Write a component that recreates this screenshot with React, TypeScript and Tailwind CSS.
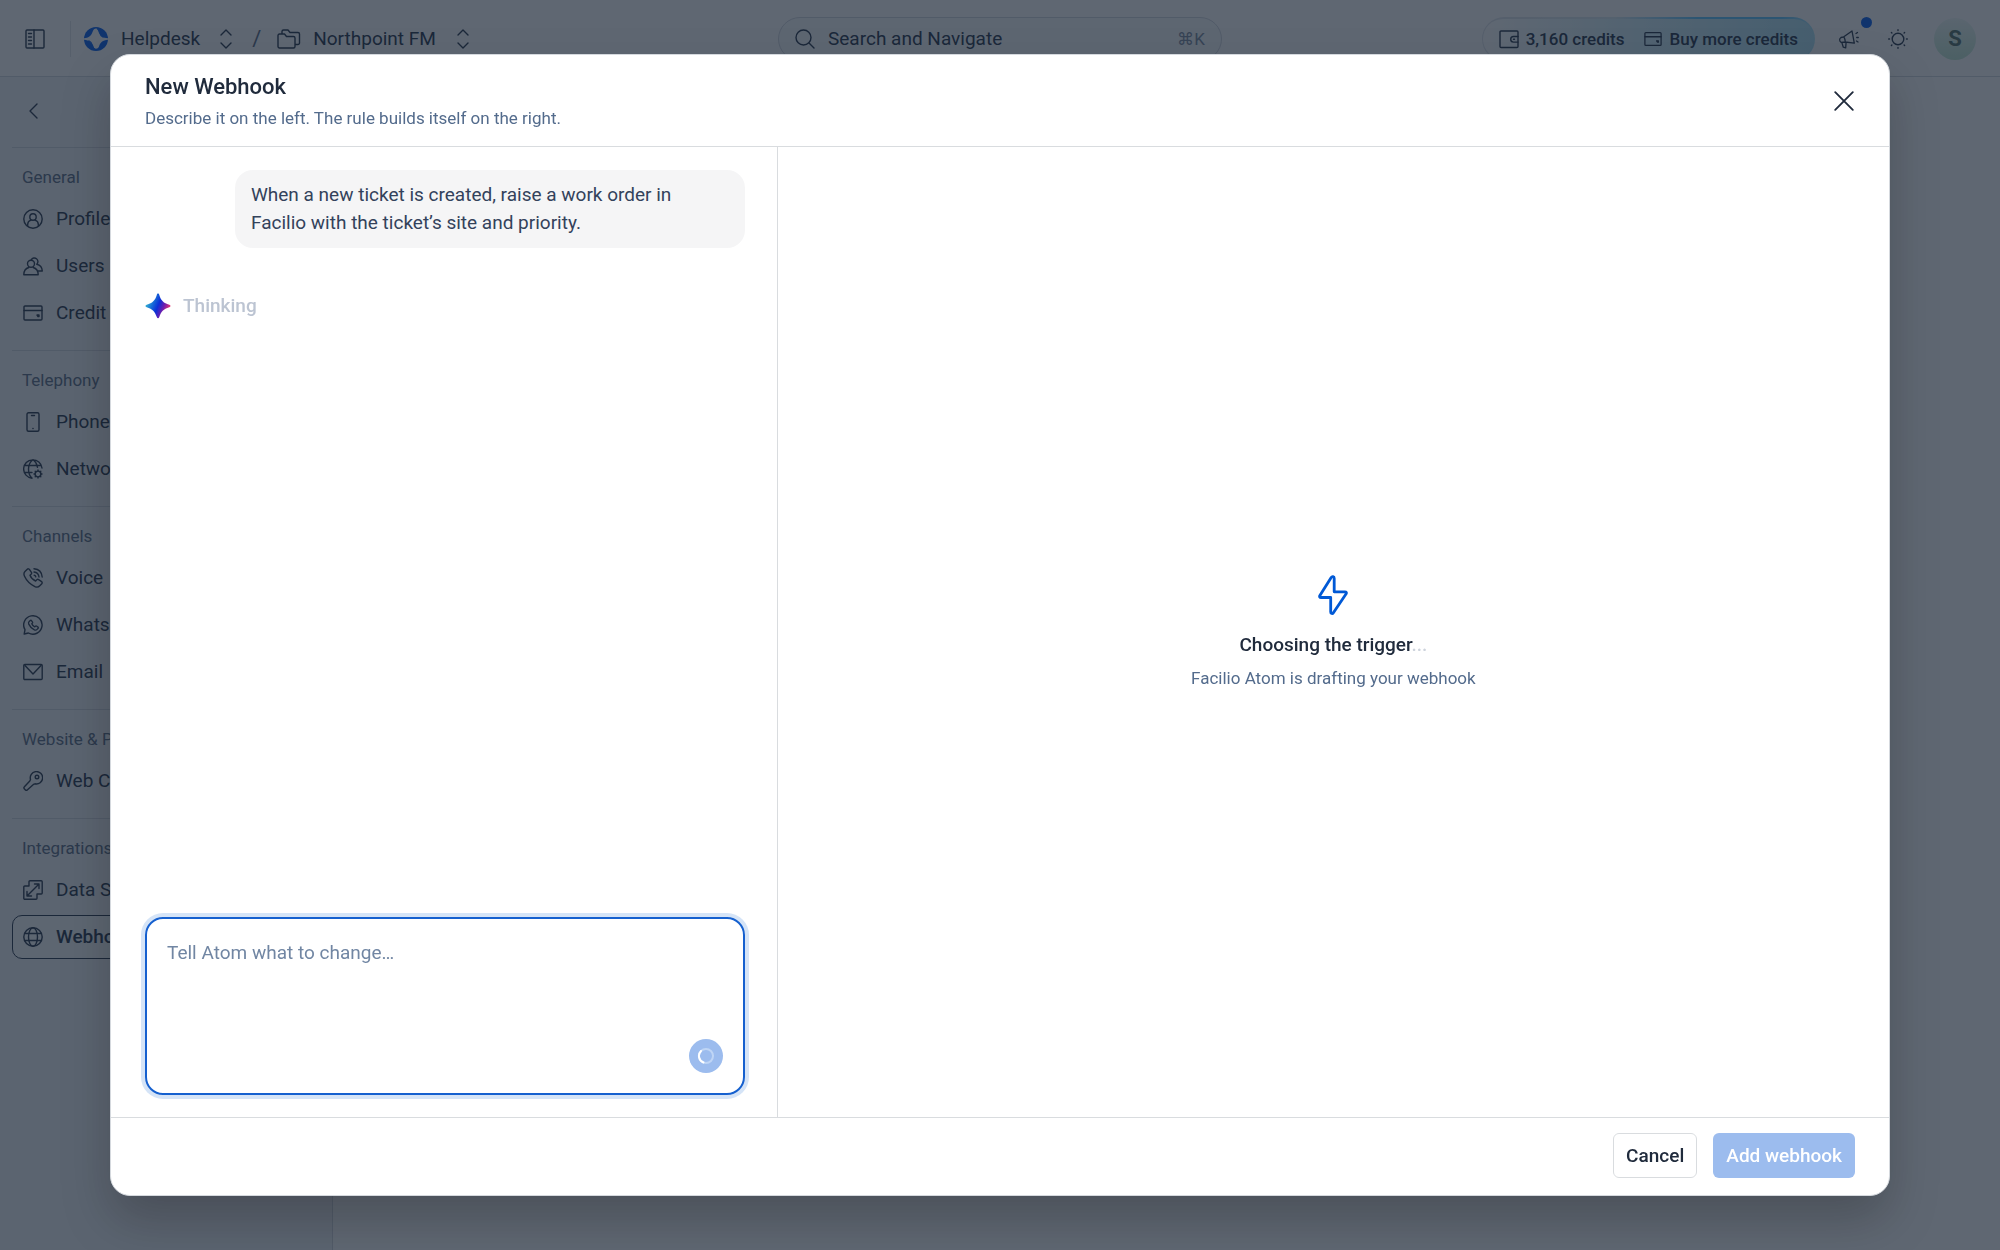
import React, { useState } from "react";

interface IconProps {
  className?: string;
  children: React.ReactNode;
}

const Icon = ({ className = "size-5", children }: IconProps) => (
  <svg
    viewBox="0 0 20 20"
    fill="none"
    stroke="currentColor"
    strokeWidth="1.4"
    strokeLinecap="round"
    strokeLinejoin="round"
    className={`shrink-0 ${className}`}
    aria-hidden="true"
  >
    {children}
  </svg>
);

const PanelIcon = () => (
  <Icon>
    <rect x="1" y="1" width="18" height="18" rx="1" />
    <path d="M9 1v18M3.500 4.500h3M3.500 8h3M3.500 11.500h3M3.500 15h3" />
  </Icon>
);

const ChevronsIcon = () => (
  <Icon>
    <path d="M5 6l5-5 5 5M5 14l5 5 5-5" />
  </Icon>
);

const FolderIcon = () => (
  <svg viewBox="0 0 24 20" fill="none" stroke="currentColor" strokeWidth="1.4" strokeLinejoin="round" className="h-5 w-6 shrink-0" aria-hidden="true">
    <path d="M1 6.500a1.500 1.500 0 0 1 1.500-1.500h5l2 2.500h7A1.500 1.500 0 0 1 18 9v8.500a1.500 1.500 0 0 1-1.500 1.500h-14A1.500 1.500 0 0 1 1 17.500z" />
    <path d="M5 5V2.500A1.500 1.500 0 0 1 6.500 1h4.500l2 2.500h8A1.500 1.500 0 0 1 22.500 5v9a1.500 1.500 0 0 1-1.500 1.500h-3" />
  </svg>
);

const SearchIcon = () => (
  <Icon>
    <circle cx="8.500" cy="8.500" r="7.500" />
    <path d="M14 14l5 5" />
  </Icon>
);

const CardIcon = ({ className }: { className?: string }) => (
  <Icon className={className}>
    <rect x="1" y="3" width="18" height="14" rx="1" />
    <path d="M1 7.500h18" />
    <path d="M14 12h2v1.500h-1z" fill="currentColor" />
  </Icon>
);

const WalletIcon = () => (
  <Icon>
    <rect x="1" y="2" width="18" height="16.500" rx="1" />
    <path d="M19 7.500h-4.500a2.800 2.800 0 0 0 0 5.600H19M14.500 10.300h1" />
  </Icon>
);

const MegaphoneIcon = () => (
  <Icon>
    <path
      d="M13 2L15.300 14.200 6.300 13 2.200 13.400A2.800 2.800 0 0 1 2 8.500L4.800 7.800zM4.800 7.800C6 9.500 6.300 11 6.300 13M2.800 13.400l1.500 4.800 2.400.6.400-5.700M17 4.500l1.500-1M17.700 8.500h1.600M17.500 12l1.500 1"
      strokeWidth="1.300"
    />
  </Icon>
);

const SunIcon = () => (
  <Icon>
    <circle cx="10" cy="10" r="5.800" />
    <path d="M10 .7v.8M10 18.500v.8M.7 10h.8M18.500 10h.8M3.400 3.400l.5.5M16.100 16.100l.5.5M3.400 16.600l.5-.5M16.100 3.900l.5-.5" />
  </Icon>
);

const ProfileIcon = () => (
  <Icon>
    <circle cx="10" cy="10" r="9.200" />
    <circle cx="10" cy="8" r="3.200" />
    <path d="M4.700 16.500v-1.200c0-2 1.500-3.500 3.300-4.100M15.300 16.500v-1.200c0-2-1.500-3.500-3.300-4.100" />
  </Icon>
);

const UsersIcon = () => (
  <Icon>
    <circle cx="8" cy="7.700" r="3.500" />
    <path d="M.8 18.800c0-4 2.200-6.500 5-7.300M10.200 11.500c2.800.8 5 3.300 5 7.300H.8" />
    <path d="M8.200 3.800a3.600 3.600 0 1 1 5.600 4.400c3 .7 5.300 3 5.500 6.800h-4.500" />
  </Icon>
);

const PhoneIcon = () => (
  <Icon>
    <rect x="4" y=".8" width="12" height="18.400" rx="1.500" />
    <path d="M8.500 3.500h3M9.900 16.500h.2" />
  </Icon>
);

const GlobeIcon = () => (
  <Icon>
    <circle cx="10" cy="10" r="9.200" />
    <ellipse cx="10" cy="10" rx="4.500" ry="9.200" />
    <path d="M1.800 6.500h16.400M1.800 13.500h16.400" />
  </Icon>
);

const NetworkIcon = () => (
  <Icon>
    <path d="M19 9A9.200 9.200 0 1 0 9 19.200M9.800.8C7 3 5.500 6.500 5.500 10s1 7 3.500 9M10.200.8c2.300 1.700 3.800 4.200 4.300 7.500M1.800 6.500h16.400M1.800 13.500H9" />
    <circle cx="15" cy="15" r="2.900" />
    <path d="M15 11v1M15 18v1M11 15h1M18 15h1M12.200 12.200l.7.7M17.100 17.100l.7.7M12.200 17.800l.7-.7M17.100 12.900l.7-.7" />
  </Icon>
);

const HANDSET =
  "M2.200 3.200L4.300 1.200a1.400 1.400 0 0 1 2.100.2l2 3a1.400 1.400 0 0 1-.3 1.800L7 7.300c.8 2.200 3.300 4.700 5.600 5.700l1.200-1.200a1.400 1.400 0 0 1 1.800-.2l3 2a1.400 1.400 0 0 1 .2 2.100l-2 2.100c-1.300 1.400-3.200 1.600-4.900.8C7.300 16.300 3.400 12.500 1.400 8 .6 6.200.8 4.600 2.200 3.200z";

const VoiceIcon = () => (
  <Icon>
    <path d={HANDSET} />
    <path d="M11 .8c4.800.4 7.800 3.700 8.200 8.200M11 4c3 .4 4.700 2.200 5 5M11.200 7.200c1 .1 1.500.7 1.600 1.700" />
  </Icon>
);

const WhatsappIcon = () => (
  <Icon>
    <path d="M1.200 19l.8-4.300A9.200 9.200 0 1 1 5.400 18z" />
    <g transform="translate(5 4.800) scale(.54)">
      <path d={HANDSET} strokeWidth="2.400" />
    </g>
  </Icon>
);

const MailIcon = () => (
  <Icon>
    <rect x=".8" y="2.500" width="18.400" height="15" rx="1" />
    <path d="M2 3.500l8 8.500 8-8.500" />
  </Icon>
);

const KeyIcon = () => (
  <Icon>
    <path d="M7.500 8.500A6.200 6.200 0 1 1 12 12.800l-1.600.6L4.500 18.800a1.500 1.500 0 0 1-2.300 0l-.8-.9a1.500 1.500 0 0 1 0-2.100L6.800 10z" />
    <circle cx="14" cy="6" r="1.800" />
  </Icon>
);

const DataIcon = () => (
  <Icon>
    <path d="M6 6V1.800a1 1 0 0 1 1-1h11.200a1 1 0 0 1 1 1V13a1 1 0 0 1-1 1H14v4.200a1 1 0 0 1-1 1H1.800a1 1 0 0 1-1-1V7a1 1 0 0 1 1-1zM4 16L16 4M11.500 4H16v4.500M4 11.500V16h4.500" />
  </Icon>
);

const HelpdeskLogo = () => (
  <svg viewBox="0 0 24 24" className="size-6 shrink-0" aria-hidden="true">
    <circle cx="12" cy="12" r="12" className="fill-[#1166ee]" />
    <path d="M0 11.200c4.500-.3 7-2 8.500-6.200.8-2.500 2-3.500 3.500-3.500 1.700 0 2.700 1.500 3.300 4 1 3.500 3.700 5.400 8.700 5.700v1.600c-5.500.4-7.700 2.700-9 6.700-1.200 3-4.800 3-6 0C7.700 15.500 5.500 13.200 0 12.800z" className="fill-white" />
    <path d="M13 1.500c1.500.7 2 2.500 2.500 4.200.6 2.300 1.800 3.800 4 4.800M4.500 13.500c2.200 1 3.400 2.500 4 4.800.5 1.700 1 3.500 2.500 4.200" fill="none" strokeWidth="1.200" className="stroke-[#1166ee]" />
  </svg>
);

const AtomStar = () => (
  <svg viewBox="0 0 26 26" className="size-[26px] shrink-0" aria-hidden="true">
    <defs>
      <linearGradient id="atom" x1="0" y1="0.3" x2="1" y2="0.7">
        <stop offset="0.05" stopColor="#35b6d0" />
        <stop offset="0.3" stopColor="#1668d8" />
        <stop offset="0.5" stopColor="#0d2fd6" />
        <stop offset="0.7" stopColor="#6a1fb0" />
        <stop offset="0.95" stopColor="#f0356e" />
      </linearGradient>
    </defs>
    <path d="M13 .5c.6 0 1 .5 1.300 1.400C16 7.500 18.500 10 24.300 11.700c1.600.5 1.600 2 0 2.500C18.500 16 16 18.500 14.300 24.100c-.5 1.600-2 1.600-2.500 0C10 18.500 7.500 16 1.700 14.200c-1.600-.5-1.600-2 0-2.500C7.500 10 10 7.500 11.800 1.900 12 1 12.400.5 13 .5z" fill="url(#atom)" />
  </svg>
);

const groups = [
  {
    title: "General",
    items: [
      { label: "Profile", icon: <ProfileIcon /> },
      { label: "Users", icon: <UsersIcon /> },
      { label: "Credit Usage", icon: <CardIcon /> },
    ],
  },
  {
    title: "Telephony",
    items: [
      { label: "Phone Numbers", icon: <PhoneIcon /> },
      { label: "Network", icon: <NetworkIcon /> },
    ],
  },
  {
    title: "Channels",
    items: [
      { label: "Voice", icon: <VoiceIcon /> },
      { label: "WhatsApp", icon: <WhatsappIcon /> },
      { label: "Email", icon: <MailIcon /> },
    ],
  },
  {
    title: "Website & Portal",
    items: [{ label: "Web Chat", icon: <KeyIcon /> }],
  },
  {
    title: "Integrations",
    items: [
      { label: "Data Sources", icon: <DataIcon /> },
      { label: "Webhooks", icon: <GlobeIcon />, active: true },
    ],
  },
];

const TopBar = () => (
  <header className="grid h-[77px] shrink-0 grid-cols-[1fr_444px_1fr] items-center border-b border-[#d5d9e0] bg-white pt-[2px] text-[#334155]">
    <div className="flex items-center pl-[25px]">
      <button type="button" aria-label="Toggle sidebar">
        <PanelIcon />
      </button>
      <span className="ml-[25px] h-9 w-px bg-[#e2e5ea]" />
      <button type="button" className="ml-[13px] flex items-center gap-[13px]">
        <HelpdeskLogo />
        <span className="text-[19px] leading-7">Helpdesk</span>
      </button>
      <button type="button" aria-label="Switch app" className="ml-4">
        <ChevronsIcon />
      </button>
      <span className="ml-4 text-[22px] leading-7 text-[#64748b]">/</span>
      <button type="button" className="ml-4 flex items-center gap-3">
        <FolderIcon />
        <span className="text-[19px] leading-7">Northpoint FM</span>
      </button>
      <button type="button" aria-label="Switch workspace" className="ml-[17px]">
        <ChevronsIcon />
      </button>
    </div>

    <label className="flex h-11 items-center rounded-full border border-[#d5d9e0] bg-[#f8fafc] px-4">
      <SearchIcon />
      <input
        type="text"
        aria-label="Search and Navigate"
        placeholder="Search and Navigate"
        className="ml-[13px] min-w-0 flex-1 bg-transparent text-[19px] leading-7 outline-none placeholder:text-[#334155]"
      />
      <kbd className="font-[Roboto,sans-serif] text-[17px] leading-6 text-[#8492a6]">⌘K</kbd>
    </label>

    <div className="flex items-center justify-end pr-6">
      <div className="rounded-full bg-[linear-gradient(90deg,#e2e5ea,#dcebf2_40%,#64c8ff_65%,#64c8ff_90%,#b5e6f5)] px-px py-[2px]">
        <div className="flex h-10 items-center rounded-full bg-[linear-gradient(90deg,#fff,#dcf3fb_40%,#b4e4f5)] px-4 text-[17px] leading-6 font-medium">
          <WalletIcon />
          <span className="ml-[7px]">3,160 credits</span>
          <button type="button" className="ml-5 flex items-center gap-[7px]">
            <CardIcon className="size-[18px]" />
            Buy more credits
          </button>
        </div>
      </div>
      <button type="button" aria-label="Announcements" className="relative ml-6">
        <MegaphoneIcon />
        <span className="absolute -top-[12px] -right-[13px] size-[11px] rounded-full bg-[#1166ee]" />
      </button>
      <button type="button" aria-label="Theme" className="ml-[29px]">
        <SunIcon />
      </button>
      <span className="ml-[26px] flex size-[42px] items-center justify-center rounded-full bg-[linear-gradient(180deg,#f0f8f6,#c4e8d4)] text-[22px] leading-7 font-bold text-[#5b7672]">
        S
      </span>
    </div>
  </header>
);

const Sidebar = () => (
  <nav className="w-[333px] shrink-0 border-r border-[#d5d9e0] bg-[#f3f5f8] px-3 text-[#334155]">
    <button type="button" aria-label="Back" className="flex h-[70px] items-center pb-[2px] pl-[11px]">
      <Icon>
        <path d="M14 3l-7 7 7 7" />
      </Icon>
    </button>
    {groups.map((group) => (
      <section key={group.title} className="border-t border-[#d5d9e0] pt-[17px] pb-[15px]">
        <h2 className="px-[10px] text-[17px] leading-6 text-[#64748b]">{group.title}</h2>
        <ul className="mt-2 flex flex-col gap-[3px]">
          {group.items.map((item) => (
            <li key={item.label}>
              <a
                href="#"
                className={`flex h-11 items-center gap-[13px] rounded-[10px] border px-[10px] text-[19px] leading-7 ${
                  "active" in item ? "border-[#334155] bg-[#f8fafc] font-medium" : "border-transparent"
                }`}
              >
                {item.icon}
                {item.label}
              </a>
            </li>
          ))}
        </ul>
      </section>
    ))}
  </nav>
);

const WebhookDialog = () => {
  const [draft, setDraft] = useState("");

  return (
    <div className="fixed inset-0 flex bg-[#111c2c]/67 px-[110px] py-[54px]">
      <div
        role="dialog"
        aria-labelledby="dialog-title"
        className="flex min-w-0 flex-1 flex-col overflow-hidden rounded-[20px] border border-[#d5d9de] bg-white shadow-[0_24px_50px_rgba(0,0,0,0.22)]"
      >
        <div className="flex h-[92px] shrink-0 items-center justify-between border-b border-[#d9dcdf] px-[34px]">
          <div className="pt-[2px]">
            <h1 id="dialog-title" className="text-[22px] leading-8 font-medium text-[#202b3c]">
              New Webhook
            </h1>
            <p className="text-[17px] leading-[30px] text-[#536b8c]">
              Describe it on the left. The rule builds itself on the right.
            </p>
          </div>
          <button type="button" aria-label="Close" className="text-[#202b3c]">
            <Icon className="size-[22px]">
              <path d="M2 2l16 16M18 2L2 18" strokeWidth="1.700" />
            </Icon>
          </button>
        </div>

        <div className="flex min-h-0 flex-1">
          <div className="flex w-3/8 flex-col border-r border-[#d9dcdf] pt-[23px] pr-8 pb-[22px] pl-[34px]">
            <p className="w-[85%] self-end rounded-[18px] bg-[#f5f5f6] px-4 py-[11px] text-[19px] leading-7 text-[#33425b]">
              When a new ticket is created, raise a work order in Facilio with the ticket’s site and priority.
            </p>
            <div className="mt-11 flex items-center gap-3">
              <AtomStar />
              <span className="text-[19px] leading-7 font-medium text-[#bcc4d2]">Thinking</span>
            </div>
            <div className="mt-auto flex h-[178px] flex-col rounded-[18px] border-2 border-[#1560cf] p-5 ring-4 ring-[#d5e4f7]">
              <textarea
                aria-label="Tell Atom what to change"
                placeholder="Tell Atom what to change…"
                value={draft}
                onChange={(e) => setDraft(e.target.value)}
                className="min-h-0 flex-1 resize-none text-[19px] leading-7 text-[#33425b] outline-none placeholder:text-[#7186a3]"
              />
              <button type="button" aria-label="Sending" disabled className="flex size-[34px] items-center justify-center self-end rounded-full bg-[#9cbcee]">
                <svg viewBox="0 0 20 20" fill="none" strokeWidth="2" className="size-5" aria-hidden="true">
                  <circle cx="10" cy="10" r="7" className="stroke-[#bfd5f5]" />
                  <path d="M7.500 16.500A7 7 0 0 1 5 5" strokeLinecap="round" className="stroke-white" />
                </svg>
              </button>
            </div>
          </div>

          <div className="flex flex-1 flex-col items-center justify-center">
            <svg viewBox="0 0 30 40" fill="none" strokeWidth="2.800" strokeLinejoin="round" className="h-10 w-[30px] stroke-[#0059d6]" aria-hidden="true">
              <path d="M13.200 2.500L1.900 20.500c-.7 1.200-.2 2 1.100 2H12.700v14.500c0 1.700 1.800 2.100 2.700.7L28 19c.8-1.200.3-2.200-1.100-2.200H16.200V3.200c0-1.700-2-2.200-3-.7z" />
            </svg>
            <p className="mt-4 text-[19px] leading-7 font-medium text-[#202b3c]">
              Choosing the trigger<span className="text-[#cdd3dc]">...</span>
            </p>
            <p className="mt-[7px] text-[17px] leading-6 text-[#536b8c]">Facilio Atom is drafting your webhook</p>
          </div>
        </div>

        <div className="flex h-[78px] shrink-0 items-center justify-end gap-4 border-t border-[#d9dcdf] pr-[34px] pb-[2px]">
          <button type="button" className="h-[45px] rounded-[6px] border border-[#d9dcdf] px-3 text-[19px] leading-7 font-medium text-[#202b3c]">
            Cancel
          </button>
          <button type="button" disabled className="h-[45px] rounded-[6px] bg-[#9cbcee] px-[13px] text-[19px] leading-7 font-medium text-white">
            Add webhook
          </button>
        </div>
      </div>
    </div>
  );
};

const App = () => (
  <div className="flex h-screen flex-col overflow-hidden bg-white font-[Roboto,sans-serif]">
    <TopBar />
    <div className="flex min-h-0 flex-1">
      <Sidebar />
      <main className="flex-1 bg-white" />
    </div>
    <WebhookDialog />
  </div>
);

export default App;
